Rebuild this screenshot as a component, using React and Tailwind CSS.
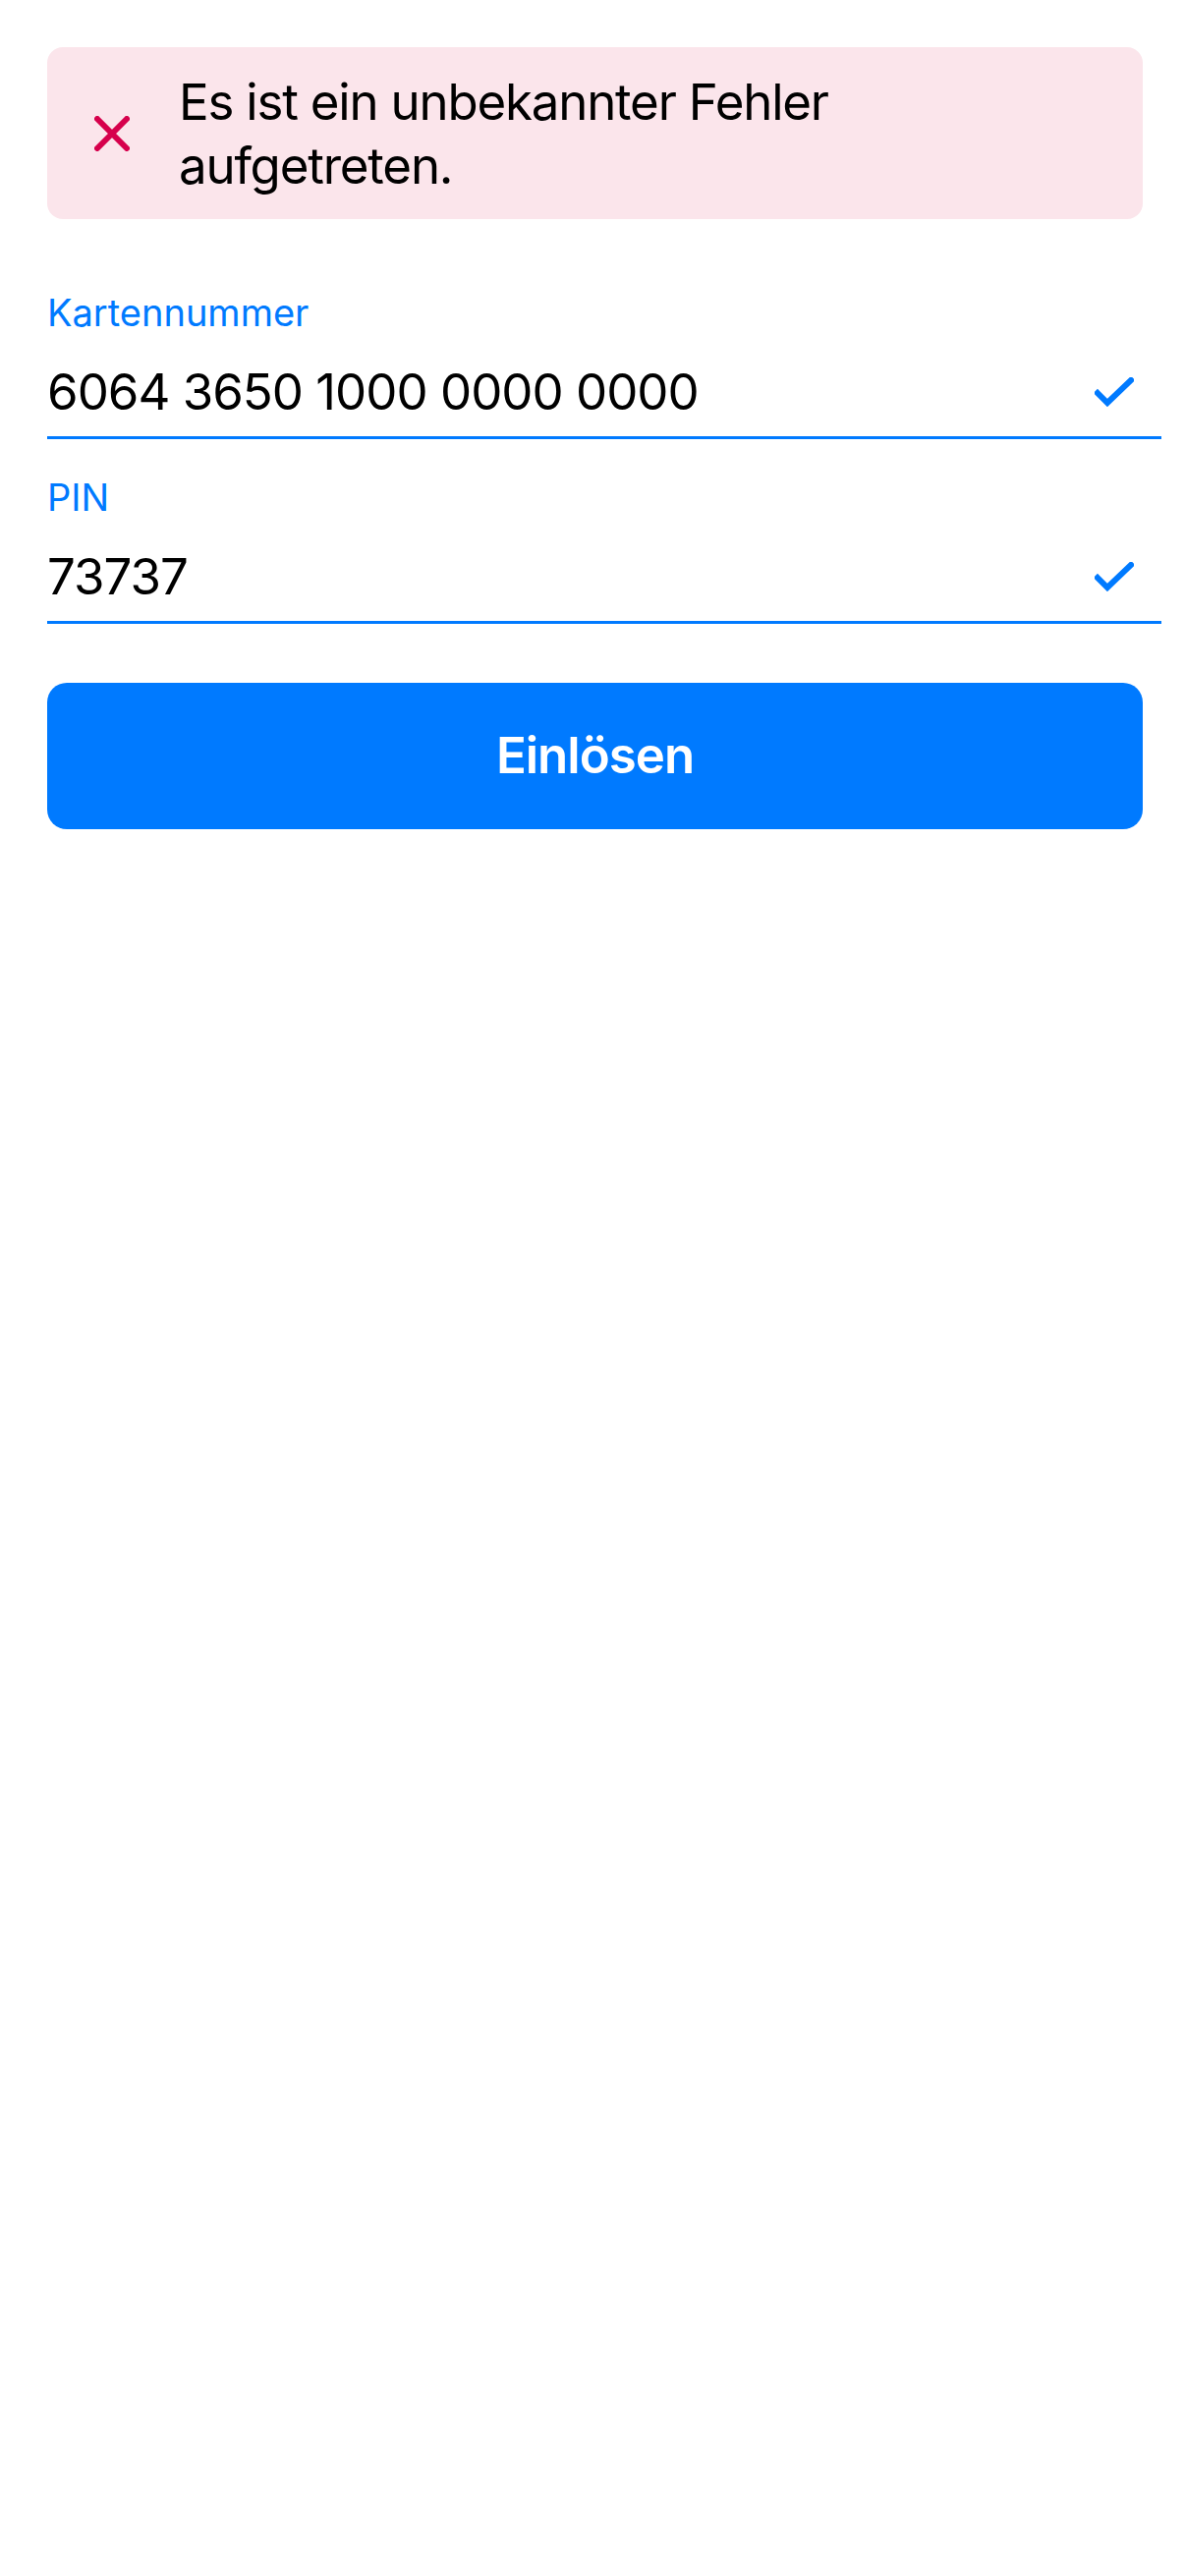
import React from 'react';

function CheckIcon() {
    return (
        <svg width="40" height="30" viewBox="0 0 40 30" fill="none" className="shrink-0">
            <path d="M3 16 L13 26 L37 3" stroke="#007AFF" strokeWidth="6" strokeLinecap="square" strokeLinejoin="miter" />
        </svg>
    );
}

function Field({ label, value, first }) {
    return (
        <div className={first ? 'w-[1134px] mt-[72px]' : 'w-[1134px] mt-[36px]'}>
            <div className="text-[38px] leading-[46px] text-[#007AFF]">{label}</div>
            <div className="flex items-center justify-between mt-[27px] pb-[14px] border-b-[3px] border-[#007AFF]">
                <span className="text-[51px] leading-[62px] tracking-[-1px] text-black">{value}</span>
                <div className="mr-[28px]">
                    <CheckIcon />
                </div>
            </div>
        </div>
    );
}

export default function App() {
    return (
        <div
            className="w-[1206px] min-h-[2622px] bg-white pt-[48px] pl-[48px]"
            style={{ fontFamily: 'Inter, "Noto Sans", sans-serif' }}
        >
            {/* error banner */}
            <div className="w-[1115px] h-[175px] rounded-[16px] bg-[#fbe5eb] flex items-center pl-[48px]">
                <svg width="36" height="36" viewBox="0 0 36 36" fill="none" className="shrink-0">
                    <path d="M3 3 L33 33 M33 3 L3 33" stroke="#d6004c" strokeWidth="6" strokeLinecap="round" />
                </svg>
                <div className="ml-[50px] w-[860px] text-[51px] leading-[65px] tracking-[-1.2px] text-black">
                    Es ist ein unbekannter Fehler aufgetreten.
                </div>
            </div>

            <Field label="Kartennummer" value="6064 3650 1000 0000 0000" first />
            <Field label="PIN" value="73737" />

            <button
                type="button"
                className="mt-[60px] w-[1115px] h-[149px] rounded-[20px] bg-[#007AFF] text-white text-[51px] tracking-[-1px] font-semibold flex items-center justify-center"
            >
                Einlösen
            </button>
        </div>
    );
}
